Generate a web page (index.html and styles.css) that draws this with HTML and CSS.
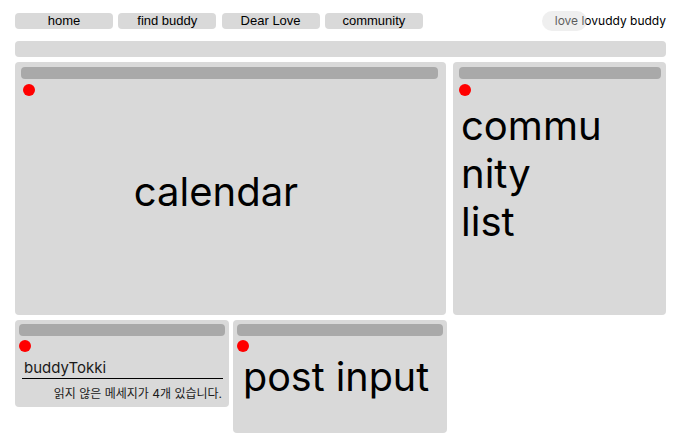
FILE: index.html
```html
<!DOCTYPE html>
<html lang="ko">
<head>
<meta charset="utf-8">
<title>love buddy</title>
<link rel="stylesheet" href="styles.css">
</head>
<body>
<div class="page">
  <header class="nav">
    <nav class="menu">
      <button class="nav-btn">home</button>
      <button class="nav-btn">find buddy</button>
      <button class="nav-btn">Dear Love</button>
      <button class="nav-btn">community</button>
    </nav>
    <div class="brand">
      <span class="brand-text">love lovuddy buddy</span>
      <span class="brand-pill"></span>
    </div>
  </header>

  <div class="topbar"></div>

  <div class="row row-top">
    <section class="panel panel-calendar">
      <div class="panel-bar"></div>
      <div class="dot dot-calendar"></div>
      <div class="calendar-text">calendar</div>
    </section>
    <section class="panel panel-community">
      <div class="panel-bar"></div>
      <div class="dot"></div>
      <div class="community-text">commu<br>nity<br>list</div>
    </section>
  </div>

  <div class="row row-bottom">
    <section class="panel panel-buddy">
      <div class="panel-bar"></div>
      <div class="dot"></div>
      <div class="buddy-name">buddyTokki</div>
      <div class="buddy-msg">읽지 않은 메세지가 4개 있습니다.</div>
    </section>
    <section class="panel panel-post">
      <div class="panel-bar"></div>
      <div class="dot"></div>
      <div class="post-text">post input</div>
    </section>
  </div>
</div>
</body>
</html>
```

FILE: styles.css
```css
* { box-sizing: border-box; }

body {
  margin: 0;
  background: #ffffff;
  font-family: Inter, "Noto Sans CJK KR", sans-serif;
  color: #000;
}

.page {
  padding: 11px 19px 0 15px;
}

.nav {
  display: flex;
  justify-content: space-between;
  align-items: center;
  height: 20px;
}

.menu {
  display: flex;
  gap: 5.3px;
}

.nav-btn {
  width: 98px;
  height: 16px;
  padding: 0;
  border: none;
  border-radius: 4px;
  background: #d9d9d9;
  font-family: "Liberation Sans", Arial, sans-serif;
  font-size: 13px;
  line-height: 16px;
  color: #000;
}

.brand {
  position: relative;
  height: 20px;
  line-height: 20px;
  font-size: 12px;
}

.brand-pill {
  position: absolute;
  left: -13px;
  top: 0;
  width: 45px;
  height: 20px;
  border-radius: 10px;
  background: rgba(217, 217, 217, 0.42);
}

.topbar {
  margin-top: 10px;
  height: 16px;
  border-radius: 4px;
  background: #d9d9d9;
}

.row {
  display: flex;
  align-items: flex-start;
  margin-top: 5px;
}

.row-top { gap: 7px; }
.row-bottom { gap: 4px; }

.panel {
  background: #d9d9d9;
  border-radius: 4px;
}

.panel-bar {
  height: 12px;
  border-radius: 4px;
  background: #a9a9a9;
}

.dot {
  width: 12px;
  height: 12px;
  border-radius: 50%;
  background: #ff0000;
  margin-top: 5px;
}

.dot-calendar { margin-left: 2px; }

.panel-calendar {
  width: 431px;
  height: 253px;
  padding: 5px 8px 0 6px;
}

.calendar-text {
  margin-top: 72px;
  padding-right: 27px;
  text-align: center;
  font-size: 40px;
  line-height: 48px;
}

.panel-community {
  flex: 1;
  height: 253px;
  padding: 5px 5px 0 6px;
}

.community-text {
  margin: 6px 0 0 2px;
  font-size: 40px;
  line-height: 48px;
}

.panel-buddy,
.panel-post {
  width: 214px;
  padding: 4px;
}

.panel-buddy { height: 87px; }
.panel-post { height: 113px; }

.panel-buddy .dot,
.panel-post .dot { margin-top: 4px; }

.buddy-name {
  margin: 6px 2px 0 3px;
  height: 21px;
  padding-left: 2px;
  border-bottom: 1px solid #000;
  font-size: 15px;
  line-height: 20px;
  color: #1a1a1a;
}

.buddy-msg {
  margin-top: 7px;
  padding-right: 3px;
  text-align: right;
  font-size: 12px;
  line-height: 16px;
  color: #1a1a1a;
}

.post-text {
  margin: 1px 0 0 6px;
  font-size: 39.5px;
  line-height: 48px;
  white-space: nowrap;
}
```
